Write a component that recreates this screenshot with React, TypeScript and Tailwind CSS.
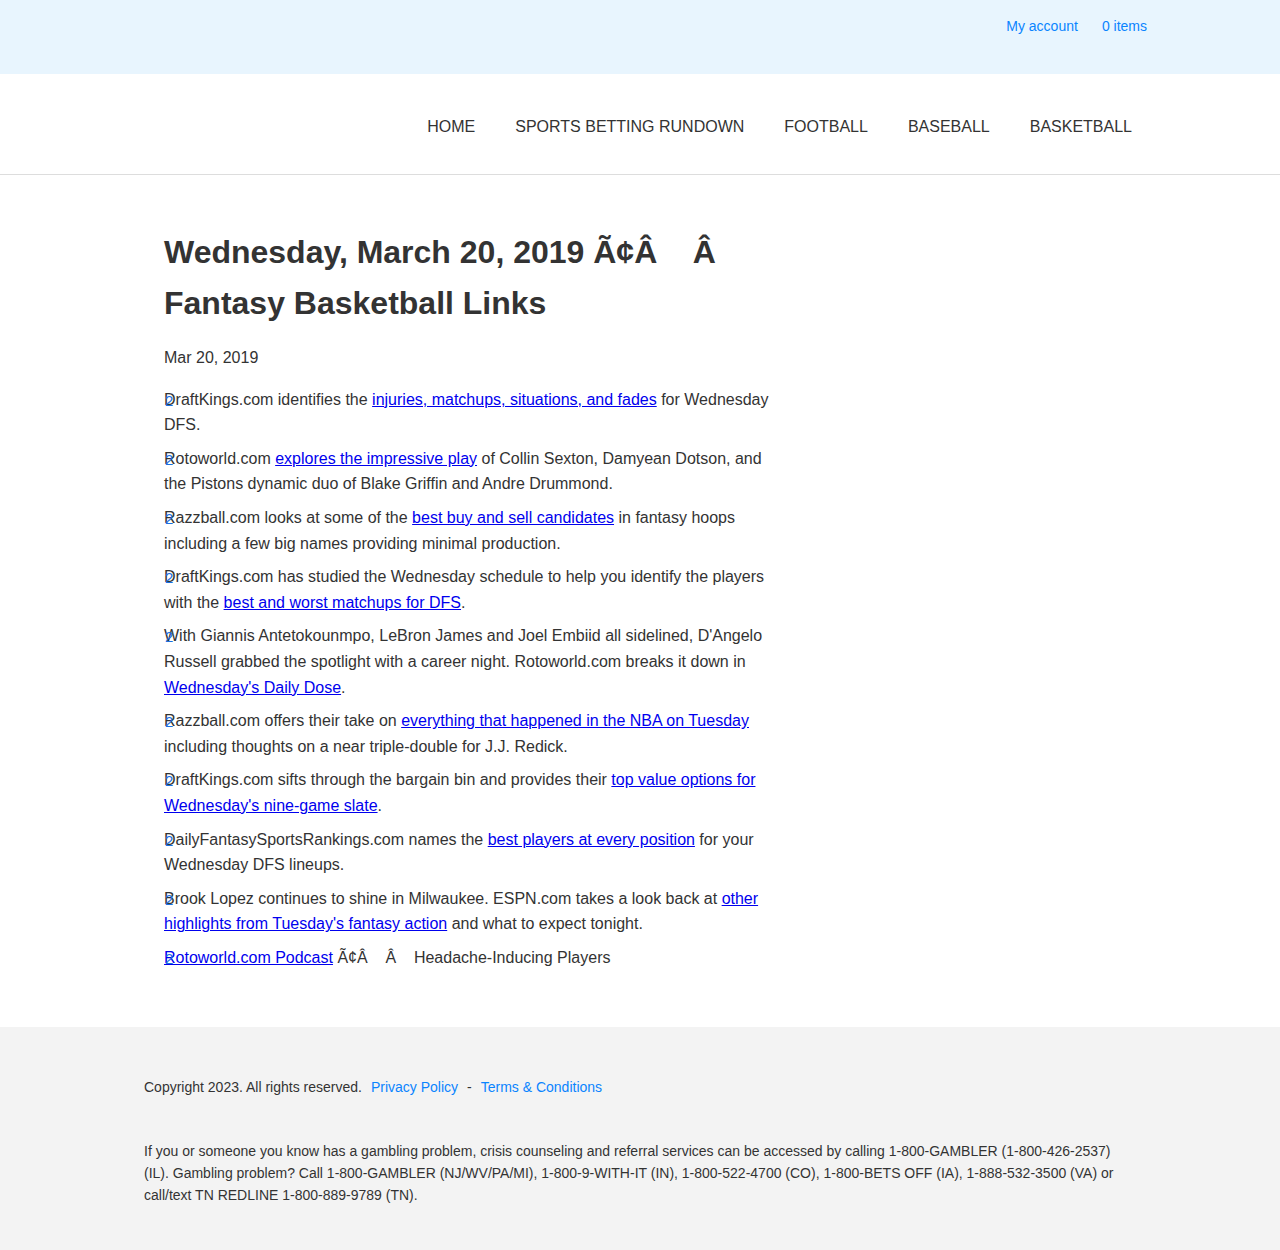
import React from "react";

const A = ({ children }: { children: React.ReactNode }) => (
  <a href="#" className="text-[#0000ee] underline">
    {children}
  </a>
);

const Mark = () => (
  <span className="absolute left-[1px] top-[1px] text-[15px] leading-[26px] text-[#1a6fe0] select-none">2</span>
);

const P = ({ children }: { children: React.ReactNode }) => (
  <p className="relative mb-2 leading-[1.6]">
    <Mark />
    {children}
  </p>
);

export default function App() {
  return (
    <div className="min-h-[1250px] bg-white text-[#333] flex flex-col" style={{ fontFamily: '"Liberation Sans", Arial, sans-serif' }}>
      <div className="bg-[#e8f5fe] h-[74px]">
        <div className="max-w-[1024px] mx-auto flex justify-end gap-6 pr-[5px] pt-[17px] text-[14px] leading-[18px] text-[#0a84ff]">
          <a href="#">My account</a>
          <a href="#">0 items</a>
        </div>
      </div>
      <div className="border-b border-[#dddddd]">
        <div className="max-w-[1024px] mx-auto h-[100px] flex items-center justify-end pt-[6px]">
          {["HOME", "SPORTS BETTING RUNDOWN", "FOOTBALL", "BASEBALL", "BASKETBALL"].map((t) => (
            <a key={t} href="#" className="px-5 text-[16px] text-[#333]">
              {t}
            </a>
          ))}
        </div>
      </div>
      <main className="flex-1">
        <div className="max-w-[992px] mx-auto px-5 pt-[52px] pb-[49px]">
          <div className="w-[621px] text-[16px]">
            <h1 className="text-[32px] font-bold leading-[51px] text-[#333]">
              Wednesday, March 20, 2019 Ã¢Â&nbsp;&nbsp;&nbsp; Â Fantasy Basketball Links
            </h1>
            <p className="mt-[16px] leading-[1.6]">Mar 20, 2019</p>
            <div className="mt-4">
              <P>
                DraftKings.com identifies the <A>injuries, matchups, situations, and fades</A> for Wednesday DFS.
              </P>
              <P>
                Rotoworld.com <A>explores the impressive play</A> of Collin Sexton, Damyean Dotson, and the Pistons dynamic duo of Blake Griffin and Andre Drummond.
              </P>
              <P>
                Razzball.com looks at some of the <A>best buy and sell candidates</A> in fantasy hoops including a few big names providing minimal production.
              </P>
              <P>
                DraftKings.com has studied the Wednesday schedule to help you identify the players with the <A>best and worst matchups for DFS</A>.
              </P>
              <P>
                With Giannis Antetokounmpo, LeBron James and Joel Embiid all sidelined, D'Angelo Russell grabbed the spotlight with a career night. Rotoworld.com breaks it down in <A>Wednesday's Daily Dose</A>.
              </P>
              <P>
                Razzball.com offers their take on <A>everything that happened in the NBA on Tuesday</A> including thoughts on a near triple-double for J.J. Redick.
              </P>
              <P>
                DraftKings.com sifts through the bargain bin and provides their <A>top value options for Wednesday's nine-game slate</A>.
              </P>
              <P>
                DailyFantasySportsRankings.com names the <A>best players at every position</A> for your Wednesday DFS lineups.
              </P>
              <P>
                Brook Lopez continues to shine in Milwaukee. ESPN.com takes a look back at <A>other highlights from Tuesday's fantasy action</A> and what to expect tonight.
              </P>
              <P>
                <A>Rotoworld.com Podcast</A> Ã¢Â&nbsp;&nbsp;&nbsp; Â&nbsp;&nbsp;&nbsp; Headache-Inducing Players
              </P>
            </div>
          </div>
        </div>
      </main>
      <footer className="bg-[#f3f3f3] h-[223px]">
        <div className="max-w-[992px] mx-auto pt-[49px] text-[14px] leading-[22px] text-[#333]">
          <p>
            Copyright 2023. All rights reserved.
            <a href="#" className="text-[#0a84ff] ml-[9px]">Privacy Policy</a>
            <span className="mx-[9px]">-</span>
            <a href="#" className="text-[#0a84ff]">Terms &amp; Conditions</a>
          </p>
          <p className="mt-[42px] pr-[16px]">
            If you or someone you know has a gambling problem, crisis counseling and referral services can be accessed by calling 1-800-GAMBLER (1-800-426-2537) (IL). Gambling problem? Call 1-800-GAMBLER (NJ/WV/PA/MI), 1-800-9-WITH-IT (IN), 1-800-522-4700 (CO), 1-800-BETS OFF (IA), 1-888-532-3500 (VA) or call/text TN REDLINE 1-800-889-9789 (TN).
          </p>
        </div>
      </footer>
    </div>
  );
}
